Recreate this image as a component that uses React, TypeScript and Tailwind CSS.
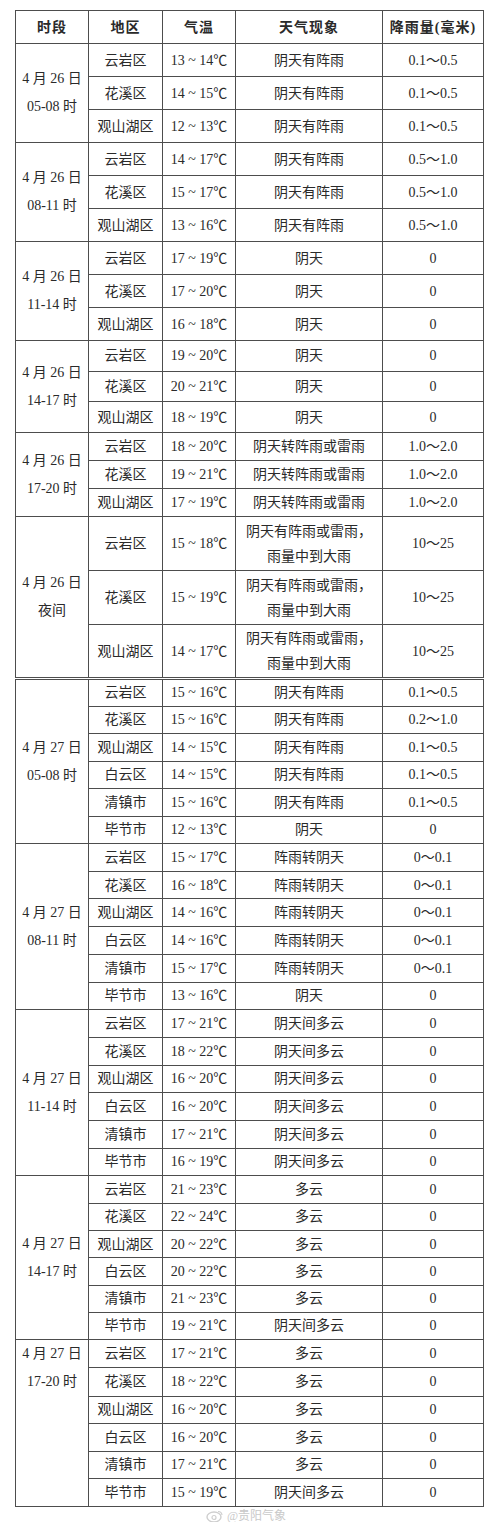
import React from "react";

type Row = [string, string, string, string];

type Group = {
  date: string;
  time: string;
  h: string;
  rows: Row[];
  last?: boolean;
  split?: number;
};

const groups: Group[] = [
  {
    date: "4 月 26 日",
    time: "05-08 时",
    h: "h-[33px]",
    rows: [
      ["云岩区", "13 ~ 14℃", "阴天有阵雨", "0.1～0.5"],
      ["花溪区", "14 ~ 15℃", "阴天有阵雨", "0.1～0.5"],
      ["观山湖区", "12 ~ 13℃", "阴天有阵雨", "0.1～0.5"],
    ],
  },
  {
    date: "4 月 26 日",
    time: "08-11 时",
    h: "h-[33px]",
    rows: [
      ["云岩区", "14 ~ 17℃", "阴天有阵雨", "0.5～1.0"],
      ["花溪区", "15 ~ 17℃", "阴天有阵雨", "0.5～1.0"],
      ["观山湖区", "13 ~ 16℃", "阴天有阵雨", "0.5～1.0"],
    ],
  },
  {
    date: "4 月 26 日",
    time: "11-14 时",
    h: "h-[33px]",
    rows: [
      ["云岩区", "17 ~ 19℃", "阴天", "0"],
      ["花溪区", "17 ~ 20℃", "阴天", "0"],
      ["观山湖区", "16 ~ 18℃", "阴天", "0"],
    ],
  },
  {
    date: "4 月 26 日",
    time: "14-17 时",
    h: "h-[30.7px]",
    rows: [
      ["云岩区", "19 ~ 20℃", "阴天", "0"],
      ["花溪区", "20 ~ 21℃", "阴天", "0"],
      ["观山湖区", "18 ~ 19℃", "阴天", "0"],
    ],
  },
  {
    date: "4 月 26 日",
    time: "17-20 时",
    h: "h-[28px]",
    rows: [
      ["云岩区", "18 ~ 20℃", "阴天转阵雨或雷雨", "1.0～2.0"],
      ["花溪区", "19 ~ 21℃", "阴天转阵雨或雷雨", "1.0～2.0"],
      ["观山湖区", "17 ~ 19℃", "阴天转阵雨或雷雨", "1.0～2.0"],
    ],
  },
  {
    date: "4 月 26 日",
    time: "夜间",
    h: "h-[54px]",
    last: true,
    rows: [
      ["云岩区", "15 ~ 18℃", "阴天有阵雨或雷雨，\n雨量中到大雨", "10～25"],
      ["花溪区", "15 ~ 19℃", "阴天有阵雨或雷雨，\n雨量中到大雨", "10～25"],
      ["观山湖区", "14 ~ 17℃", "阴天有阵雨或雷雨，\n雨量中到大雨", "10～25"],
    ],
  },
  {
    date: "4 月 27 日",
    time: "05-08 时",
    h: "h-[27.5px]",
    rows: [
      ["云岩区", "15 ~ 16℃", "阴天有阵雨", "0.1～0.5"],
      ["花溪区", "15 ~ 16℃", "阴天有阵雨", "0.2～1.0"],
      ["观山湖区", "14 ~ 15℃", "阴天有阵雨", "0.1～0.5"],
      ["白云区", "14 ~ 15℃", "阴天有阵雨", "0.1～0.5"],
      ["清镇市", "15 ~ 16℃", "阴天有阵雨", "0.1～0.5"],
      ["毕节市", "12 ~ 13℃", "阴天", "0"],
    ],
  },
  {
    date: "4 月 27 日",
    time: "08-11 时",
    h: "h-[27.7px]",
    rows: [
      ["云岩区", "15 ~ 17℃", "阵雨转阴天", "0～0.1"],
      ["花溪区", "16 ~ 18℃", "阵雨转阴天", "0～0.1"],
      ["观山湖区", "14 ~ 16℃", "阵雨转阴天", "0～0.1"],
      ["白云区", "14 ~ 16℃", "阵雨转阴天", "0～0.1"],
      ["清镇市", "15 ~ 17℃", "阵雨转阴天", "0～0.1"],
      ["毕节市", "13 ~ 16℃", "阴天", "0"],
    ],
  },
  {
    date: "4 月 27 日",
    time: "11-14 时",
    h: "h-[27.7px]",
    rows: [
      ["云岩区", "17 ~ 21℃", "阴天间多云", "0"],
      ["花溪区", "18 ~ 22℃", "阴天间多云", "0"],
      ["观山湖区", "16 ~ 20℃", "阴天间多云", "0"],
      ["白云区", "16 ~ 20℃", "阴天间多云", "0"],
      ["清镇市", "17 ~ 21℃", "阴天间多云", "0"],
      ["毕节市", "16 ~ 19℃", "阴天间多云", "0"],
    ],
  },
  {
    date: "4 月 27 日",
    time: "14-17 时",
    h: "h-[27.3px]",
    rows: [
      ["云岩区", "21 ~ 23℃", "多云", "0"],
      ["花溪区", "22 ~ 24℃", "多云", "0"],
      ["观山湖区", "20 ~ 22℃", "多云", "0"],
      ["白云区", "20 ~ 22℃", "多云", "0"],
      ["清镇市", "21 ~ 23℃", "多云", "0"],
      ["毕节市", "19 ~ 21℃", "阴天间多云", "0"],
    ],
  },
  {
    date: "4 月 27 日",
    time: "17-20 时",
    h: "h-[27.5px]",
    split: 2,
    rows: [
      ["云岩区", "17 ~ 21℃", "多云", "0"],
      ["花溪区", "18 ~ 22℃", "多云", "0"],
      ["观山湖区", "16 ~ 20℃", "多云", "0"],
      ["白云区", "16 ~ 20℃", "多云", "0"],
      ["清镇市", "17 ~ 21℃", "多云", "0"],
      ["毕节市", "15 ~ 19℃", "阴天间多云", "0"],
    ],
  },
];

const cell = "border border-[#4d4d4d] p-0 text-center align-middle";

function GroupRows({ g }: { g: Group }) {
  return (
    <>
      {g.rows.map((r, i) => {
        const isLast = g.last && i === g.rows.length - 1;
        const edge = isLast ? "border-b-[3px] border-double" : "";
        const leftSpan = g.split ?? g.rows.length;
        return (
          <tr key={i} className={g.h}>
            {i === 0 && (
              <td
                rowSpan={leftSpan}
                className={`${cell} ${g.last ? "border-b-[3px] border-double" : ""} ${g.split ? "border-b-0" : ""} leading-[28px]`}
              >
                <div>{g.date}</div>
                <div>{g.time}</div>
              </td>
            )}
            {g.split && i === g.split && (
              <td rowSpan={g.rows.length - g.split} className={`${cell} border-t-0`} />
            )}
            <td className={`${cell} ${edge}`}>{r[0]}</td>
            <td className={`${cell} ${edge}`}>{r[1]}</td>
            <td className={`${cell} ${edge} whitespace-pre-line leading-[25px]`}>{r[2]}</td>
            <td className={`${cell} ${edge}`}>{r[3]}</td>
          </tr>
        );
      })}
    </>
  );
}

export default function App() {
  return (
    <div
      className="relative w-[500px] h-[1522px] bg-white text-[#2a2a2a] text-[14px] overflow-hidden"
      style={{ fontFamily: "'Liberation Serif', 'Noto Sans CJK SC', serif" }}
    >
      <div className="pt-[10px] pl-[15px]">
        <table className="table-fixed border-collapse w-[468px]">
          <colgroup>
            <col className="w-[73px]" />
            <col className="w-[74px]" />
            <col className="w-[73px]" />
            <col className="w-[147px]" />
            <col className="w-[101px]" />
          </colgroup>
          <thead>
            <tr className="h-[33px] font-bold tracking-[1px]">
              <th className={cell}>时段</th>
              <th className={cell}>地区</th>
              <th className={cell}>气温</th>
              <th className={cell}>天气现象</th>
              <th className={cell}>降雨量(毫米)</th>
            </tr>
          </thead>
          <tbody>
            {groups.map((g, i) => (
              <GroupRows key={i} g={g} />
            ))}
          </tbody>
        </table>
      </div>

      {/* weibo watermark */}
      <div className="absolute left-[206px] top-[1507px] flex items-center gap-[3px] text-[12px] text-[#c9c9c9]">
        <svg width="18" height="14" viewBox="0 0 18 14" fill="none">
          <ellipse cx="8" cy="8" rx="7" ry="5" stroke="#cfcfcf" strokeWidth="1.4" />
          <circle cx="8" cy="8.5" r="2" stroke="#cfcfcf" strokeWidth="1.2" />
          <path d="M12 2.5 A4 4 0 0 1 16 6" stroke="#cfcfcf" strokeWidth="1.2" />
        </svg>
        <span>@贵阳气象</span>
      </div>
    </div>
  );
}
